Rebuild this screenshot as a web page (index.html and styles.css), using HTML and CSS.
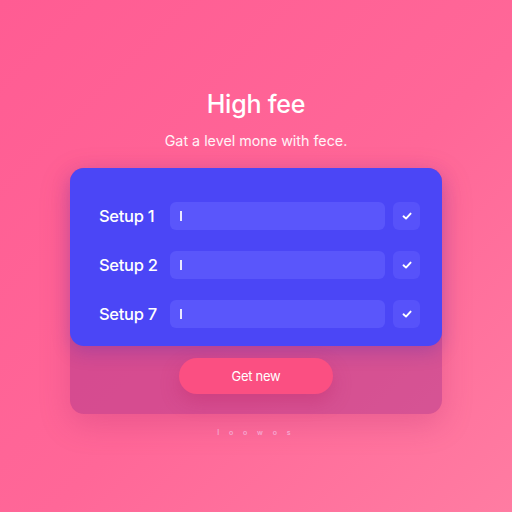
FILE: index.html
```html
<!DOCTYPE html>
<html lang="en">
<head>
  <meta charset="UTF-8">
  <title>High fee</title>
  <link rel="stylesheet" href="styles.css">
</head>
<body>
  <div class="page">
    <h1 class="title">High fee</h1>
    <p class="subtitle">Gat a level mone with fece.</p>

    <div class="panel">
      <!-- filas de configuración -->
      <div class="card">
        <div class="row">
          <span class="row-label">Setup 1</span>
          <div class="field"><span class="caret"></span></div>
          <div class="check">
            <svg viewBox="0 0 12 12" width="12" height="12"><path d="M2.5 6.3 L5 8.6 L9.6 3.6" fill="none" stroke="#fff" stroke-width="1.9" stroke-linecap="round" stroke-linejoin="round"/></svg>
          </div>
        </div>
        <div class="row">
          <span class="row-label">Setup 2</span>
          <div class="field"><span class="caret"></span></div>
          <div class="check">
            <svg viewBox="0 0 12 12" width="12" height="12"><path d="M2.5 6.3 L5 8.6 L9.6 3.6" fill="none" stroke="#fff" stroke-width="1.9" stroke-linecap="round" stroke-linejoin="round"/></svg>
          </div>
        </div>
        <div class="row">
          <span class="row-label">Setup 7</span>
          <div class="field"><span class="caret"></span></div>
          <div class="check">
            <svg viewBox="0 0 12 12" width="12" height="12"><path d="M2.5 6.3 L5 8.6 L9.6 3.6" fill="none" stroke="#fff" stroke-width="1.9" stroke-linecap="round" stroke-linejoin="round"/></svg>
          </div>
        </div>
      </div>

      <div class="actions">
        <button class="btn">Get new</button>
      </div>
    </div>

    <div class="footer">I o o w o s</div>
  </div>
</body>
</html>
```

FILE: styles.css
```css
body {
  margin: 0;
  height: 100vh;
  background: linear-gradient(135deg, #ff5c93 0%, #ff6798 55%, #ff7ca2 100%);
  font-family: 'Inter', 'Noto Sans', sans-serif;
  color: white;
  overflow: hidden;
}

.page {
  display: flex;
  flex-direction: column;
  align-items: center;
  padding-top: 89px;
}

.title {
  margin: 0;
  font-size: 25px;
  font-weight: 500;
  line-height: 30px;
  letter-spacing: -0.2px;
}

.subtitle {
  margin: 13px 0 0;
  font-size: 14.3px;
  line-height: 18px;
  font-weight: 400;
  color: #fff3f7;
}

.panel {
  margin-top: 18px;
  width: 372px;
  border-radius: 14px;
  background: rgba(165, 45, 135, 0.45);
  box-shadow: 0 10px 30px rgba(170, 40, 110, 0.25);
}

.card {
  background: #4b46f6;
  border-radius: 14px;
  padding: 34px 22px 18px 29px;
  display: flex;
  flex-direction: column;
  gap: 21px;
  box-shadow: 0 6px 18px rgba(60, 40, 180, 0.25);
}

.row {
  display: flex;
  align-items: center;
  height: 28px;
}

.row-label {
  width: 71px;
  font-size: 16.5px;
  font-weight: 500;
  letter-spacing: -0.3px;
}

.field {
  flex: 1;
  height: 28px;
  border-radius: 6px;
  background: #5a56fb;
  display: flex;
  align-items: center;
  padding-left: 10px;
}

.caret {
  width: 2px;
  height: 10px;
  background: #e9e8ff;
}

.check {
  width: 27px;
  height: 28px;
  margin-left: 8px;
  border-radius: 6px;
  background: #5752fa;
  display: flex;
  align-items: center;
  justify-content: center;
}

.actions {
  display: flex;
  justify-content: center;
  padding: 12px 0 20px;
}

.btn {
  width: 154px;
  height: 36px;
  border: none;
  border-radius: 18px;
  background: #fb4f82;
  color: white;
  font-family: inherit;
  font-size: 13px;
  letter-spacing: -0.3px;
  box-shadow: 0 8px 18px rgba(190, 40, 100, 0.35);
}

.footer {
  margin-top: 14px;
  font-size: 7px;
  letter-spacing: 4px;
  color: #f5a6cf;
  font-weight: 600;
}
```
